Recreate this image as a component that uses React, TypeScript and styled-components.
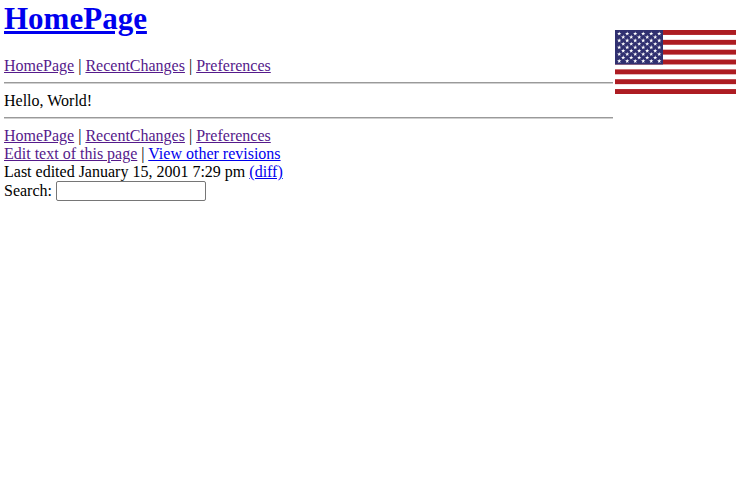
import React from 'react';
import styled, { createGlobalStyle } from 'styled-components';

const GlobalStyle = createGlobalStyle`
  body {
    margin: 0;
    background: #fff;
    color: #000;
    font-family: "Liberation Serif", "Times New Roman", serif;
    font-size: 16px;
    line-height: 18px;
  }
`;

const Page = styled.div`
  display: flex;
  align-items: flex-start;
  gap: 2px;
  padding: 0 8px 0 4px;
`;

const Content = styled.main`
  flex: 1;
  min-width: 0;
  padding-top: 1px;
`;

const Title = styled.h1`
  margin: 0 0 20px;
  font-size: 31px;
  line-height: 36px;
`;

const WikiLink = styled.a<{ $visited?: boolean }>`
  color: ${(p) => (p.$visited ? '#551a8b' : '#0000ee')};
  text-decoration: underline;
`;

const Line = styled.div``;

const Rule = styled.hr`
  height: 0;
  margin: 7px 0 8px;
  border: 0;
  border-top: 1px solid #9a9a9a;
  border-bottom: 1px solid #d0d0d0;
`;

const SearchForm = styled.form`
  display: flex;
  align-items: center;
  gap: 4px;
`;

const SearchInput = styled.input`
  box-sizing: border-box;
  width: 150px;
  height: 20px;
  padding: 1px 2px;
  border: 1px solid #767676;
  border-radius: 2px;
  background: #fff;
  font: inherit;
`;

const FlagImage = styled.svg`
  flex: none;
  width: 121px;
  height: 64px;
  margin-top: 30px;
`;

const stripes = Array.from({ length: 7 }, (_, i) => i * 2);
const stars = Array.from({ length: 9 }, (_, row) =>
  Array.from({ length: row % 2 ? 5 : 6 }, (_, col) => ({
    x: 4.2 + col * 8 + (row % 2 ? 4 : 0),
    y: 3.7 + row * 3.42,
  })),
).flat();

function Flag() {
  return (
    <FlagImage viewBox="0 0 121 64" role="img" aria-label="Flag of the United States">
      <rect width="121" height="64" fill="#fff" />
      {stripes.map((n) => (
        <rect key={n} y={(n * 64) / 13} width="121" height={64 / 13} fill="#ad1c22" />
      ))}
      <rect width="48" height="34.5" fill="#303070" />
      {stars.map(({ x, y }) => (
        <path
          key={`${x}-${y}`}
          transform={`translate(${x} ${y}) scale(2.3)`}
          d="M0-1 .23-.31H.95L.36.12.59.81 0 .38-.59.81-.36.12-.95-.31H-.23Z"
          fill="#fff"
        />
      ))}
    </FlagImage>
  );
}

function Navigation() {
  return (
    <Line as="nav">
      <WikiLink href="#home" $visited>HomePage</WikiLink> |{' '}
      <WikiLink href="#changes" $visited>RecentChanges</WikiLink> |{' '}
      <WikiLink href="#preferences" $visited>Preferences</WikiLink>
    </Line>
  );
}

export default function App() {
  return (
    <>
      <GlobalStyle />
      <Page>
        <Content>
          <Title><WikiLink href="#home">HomePage</WikiLink></Title>
          <Navigation />
          <Rule />
          <Line>Hello, World!</Line>
          <Rule />
          <Navigation />
          <Line>
            <WikiLink href="#edit" $visited>Edit text of this page</WikiLink> |{' '}
            <WikiLink href="#revisions">View other revisions</WikiLink>
          </Line>
          <Line>
            Last edited January 15, 2001 7:29 pm <WikiLink href="#diff">(diff)</WikiLink>
          </Line>
          <SearchForm onSubmit={(e) => e.preventDefault()}>
            <label htmlFor="search">Search:</label>
            <SearchInput id="search" name="search" type="text" />
          </SearchForm>
        </Content>
        <Flag />
      </Page>
    </>
  );
}
